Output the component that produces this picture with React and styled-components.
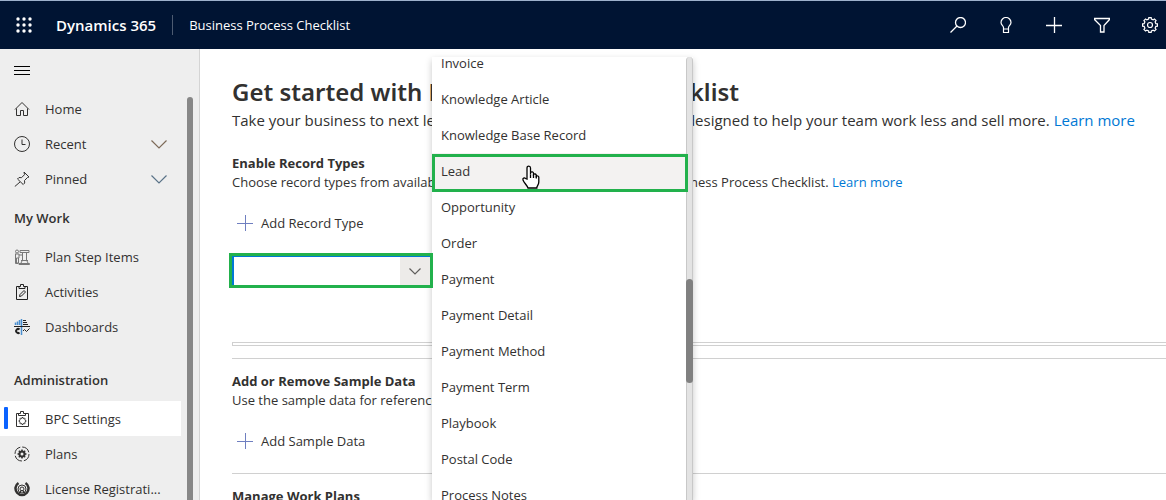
import React from "react";
import styled, { createGlobalStyle, css } from "styled-components";

const Global = createGlobalStyle`
  * { box-sizing: border-box; }
  html, body, #root { height: 100%; }
  body { margin: 0; background: #fff; color: #323130; overflow: hidden;
    font: 14px/20px "Open Sans", "Noto Sans", sans-serif; }
  button { font: inherit; color: inherit; background: none; border: 0; padding: 0; }
  h1, h2, p, ul { margin: 0; padding: 0; }
  ul { list-style: none; }
  a { text-decoration: none; color: inherit; }
`;

const Page = styled.div`height: 100%; display: flex; flex-direction: column;`;

const TopBar = styled.header`
  flex: none; display: flex; align-items: center; height: 49px;
  padding: 0 8px 0 16px; background: #001433; border-top: 1px solid #9db1cc; color: #fff;
`;
const Brand = styled.a`margin-left: 24px; font-size: 15px; font-weight: 600;`;
const AppName = styled.a`
  display: flex; align-items: center; height: 20px; margin-left: 16px; padding-left: 16px;
  border-left: 1px solid #4d5b71; font-size: 13px;
`;
const Actions = styled.div`display: flex; gap: 32px; margin-left: auto;`;
const IconButton = styled.button`display: flex;`;

const Body = styled.div`flex: 1; min-height: 0; display: flex;`;
const Sidebar = styled.nav`
  flex: none; width: 200px; display: flex; flex-direction: column; overflow: hidden;
  background: #eee; border-right: 1px solid #d4d4d4;
`;
const MenuToggle = styled.button`display: flex; margin: 12px 0 0 13px;`;
const NavScroll = styled.div`flex: 1; min-height: 0; display: flex; margin-top: 18px;`;
const NavList = styled.div`flex: none; width: 181px; margin-top: -6px;`;
const NavThumb = styled.div`width: 6px; margin-left: 6px; background: #878787; border-radius: 3px 3px 0 0;`;
const NavItem = styled.a`
  position: relative; display: flex; align-items: center; height: 35px; padding: 0 14px;
  font-size: 13px; white-space: nowrap;
  background: ${(p) => (p.$active ? "#fff" : "transparent")};
  ${(p) => p.$active && css`
    &::before { content: ""; position: absolute; left: 4px; top: 6px; width: 4px; height: 22px; background: #0b63ff; border-radius: 1px; }
  `}
  span { flex: 1; margin-left: 15px; }
`;
const NavHeading = styled.h2`
  margin-top: ${(p) => p.$gap}px; height: 43px; padding: 12px 14px; font-size: 13px; line-height: 20px; font-weight: 600;
`;

const Main = styled.main`position: relative; flex: 1; min-width: 0; padding: 26px 0 0 32px; overflow: hidden;`;
const Title = styled.h1`font-family: "Noto Sans", "Open Sans", sans-serif; font-size: 24px; line-height: 34px; font-weight: 600; white-space: nowrap;`;
const Lead = styled.p`font-size: 15px; line-height: 22px; white-space: nowrap;`;
const Link = styled.a`color: #0078d4;`;
const Section = styled.section`
  padding: ${(p) => p.$top}px 0 ${(p) => p.$bottom || 0}px;
  ${(p) => p.$ruled && css`border-top: 1px solid #d0d0d0;`}
`;
const SectionTitle = styled.h2`font-size: 13px; line-height: 20px; font-weight: 700;`;
const Text = styled.p`font-size: 13px; line-height: 18px; white-space: nowrap;`;
const Command = styled.button`
  display: flex; align-items: center; gap: 8px; height: 32px; margin-top: 16px; padding-left: 5px; font-size: 13px;
`;
const Combo = styled.div`
  position: relative; z-index: 2;
  display: flex; width: 204px; height: 35px; margin: 14px 0 0 -3px; border: 3px solid #22b14c;
  input { flex: 1; min-width: 0; border: solid #0078d4; border-width: 1px 0 0 2px; outline: 0; background: #fff; }
  button { display: flex; align-items: center; justify-content: center; width: 30px; background: #edebe9; border-top: 1px solid #0078d4; }
`;
const GridEdge = styled.div`height: 4px; margin: 54px 0 12px; border: solid #d0d0d0; border-width: 1px 0 1px 1px;`;

const Dropdown = styled.div`
  position: absolute; z-index: 1; left: 232px; top: 8px; bottom: 0; width: 261px; display: flex;
  background: #fff; box-shadow: 0 3px 7px rgba(0,0,0,.22);
`;
const Options = styled.ul`flex: 1; margin-top: -12px; clip-path: inset(12px -2px 0 0);`;
const Option = styled.li`
  position: relative; display: flex; align-items: center; height: 36px; padding: 0 9px; font-size: 13px;
  background: ${(p) => (p.$hot ? "#f3f2f1" : "transparent")};
`;
const Highlight = styled.div`
  position: absolute; left: 0; top: 1px; width: 256px; height: 38px; border: 3px solid #22b14c; z-index: 2;
`;
const Hand = styled.svg`position: absolute; left: 88px; top: 12px; z-index: 3;`;
const Track = styled.div`width: 7px; background: #e3e3e3; border-left: 1px solid #c8c8c8; border-right: 1px solid #c8c8c8; border-radius: 4px 4px 0 0;`;
const Thumb = styled.div`height: 104px; margin: 222px -1px 0; border-radius: 4px; background: #808080;`;

const Svg = ({ s = 16, w = 1, children, ...r }) => (
  <svg width={s} height={s} viewBox={`0 0 ${s} ${s}`} fill="none" stroke="currentColor" strokeWidth={w} aria-hidden="true" {...r}>{children}</svg>
);
const Gear = ({ cx, cy, r, teeth = 8, ...rest }) => {
  const pts = [];
  for (let i = 0; i < teeth; i++) {
    const a = (i * 2 * Math.PI) / teeth;
    [[-0.3, 0.8], [-0.2, 1], [0.2, 1], [0.3, 0.8]].forEach(([d, k]) => {
      const t = a + (d * 2 * Math.PI) / teeth;
      pts.push(`${cx + r * k * Math.cos(t)},${cy + r * k * Math.sin(t)}`);
    });
  }
  return <polygon points={pts.join(" ")} {...rest} />;
};
const Chevron = ({ wide, color = "#605e5c" }) => wide
  ? <svg width="16" height="11" viewBox="0 0 16 11" fill="none" stroke={color} strokeWidth="1.2" aria-hidden="true"><path d="M.5 2.500 8 10l7.500-7.500" /></svg>
  : <svg width="12" height="7" viewBox="0 0 12 7" fill="none" stroke={color} strokeWidth="1.2" aria-hidden="true"><path d="M.5.5 6 6 11.500.5" /></svg>;
const Plus = () => <Svg stroke="#6f7fc0"><path d="M8.500 0v16M0 8.500h16" /></Svg>;

const icons = {
  home: <Svg><path d="M1 8.500 8 1.500l7 7M2.500 7.500v7h4v-5h3v5h4v-7" /></Svg>,
  recent: <Svg><circle cx="8" cy="8" r="7.500" /><path d="M8 3.500v5h3.500" /></Svg>,
  pinned: <Svg><path d="M10 1l5 5-1.500.5-3 3 .2 2.500-1.500 1.500L3.500 8 5 6.500l2.500.2 3-3L10 1zM6 11 .8 15.500" /></Svg>,
  plan: <Svg stroke="#777"><path d="M6 1.500h9v2H6zM8.500 4v7M12.500 4v7M7 11.500h7M5 14.500h10.500v1H5zM8 12l-1 2M13 12l1 2M1 5h4v4H2.500v5h2V9M1.500 5v9.500h3M5 6h3" /><circle cx="3" cy="2.500" r="1.500" /></Svg>,
  activities: <Svg stroke="#222"><path d="M5 2.500H2.500v13h11v-13H11M5 4.500v-2h1.500v-2h3v2H11v2zM5.500 12.500l.5-2 4-4 1.500 1.500-4 4z" /></Svg>,
  dashboards: <Svg><path stroke="#4a8fd0" d="M1.500 6V3.500M3.500 6V2.500M5.500 6V1M7.500 0v16" strokeWidth="1.500" /><path stroke="#222" d="M0 7.500h16M9 1.500h3M9 3.500h4M9 5.500h5M9 12l1.500-1.500 2 2 3-3" /><path stroke="#222" strokeWidth="2" d="M5.500 10.500a2 2 0 1 0 0 3" /></Svg>,
  settings: <Svg><path d="M5 2.500H2.500v13h12v-13H11M4.500 4.500v-2h2v-2h3v2h2v2z" /><Gear cx={8.5} cy={10} r={3.5} /></Svg>,
  plans: <Svg><circle cx="8" cy="8" r="7" strokeDasharray="9 2" /><Gear cx={8} cy={8} r={4.5} fill="currentColor" stroke="none" /><circle cx="8" cy="8" r="1.500" fill="#eee" stroke="none" /></Svg>,
  license: <Svg><path strokeWidth="2.500" d="M4.500 2a6.500 6.500 0 1 0 7 0" /><circle cx="8" cy="8" r="4" /><circle cx="8" cy="8" r="2" /><path d="M5 12l3-3 3 3" /></Svg>,
};
const Item = ({ icon, label, chevron, active }) => (
  <NavItem href="#" $active={active} aria-current={active ? "page" : undefined}>{icons[icon]}<span>{label}</span>{chevron && <Chevron wide color={chevron} />}</NavItem>
);

const records = ["Invoice", "Knowledge Article", "Knowledge Base Record", "Lead", "Opportunity", "Order", "Payment", "Payment Detail", "Payment Method", "Payment Term", "Playbook", "Postal Code", "Process Notes"];

export default function App() {
  return (
    <Page>
      <Global />
      <TopBar>
        <IconButton aria-label="App launcher">
          <Svg stroke="none">{[2, 8, 14].map((y) => [2, 8, 14].map((x) => <circle key={x + "-" + y} cx={x} cy={y} r="1.700" fill="#fff" />))}</Svg>
        </IconButton>
        <Brand href="#">Dynamics 365</Brand>
        <AppName href="#">Business Process Checklist</AppName>
        <Actions>
          <IconButton aria-label="Search"><Svg w={1.3}><circle cx="10.500" cy="5.500" r="5" /><path d="M7 9 .5 15.500" /></Svg></IconButton>
          <IconButton aria-label="Tips"><Svg w={1.2}><path d="M5.500 12v-1.500C5.500 9 3 8 3 5.500a5 5 0 0 1 10 0C13 8 10.500 9 10.500 10.500V12zM5.500 12v3.500h5V12" /></Svg></IconButton>
          <IconButton aria-label="New"><Svg w={1.3}><path d="M8.500 0v16M0 8.500h16" /></Svg></IconButton>
          <IconButton aria-label="Filter"><Svg w={1.3}><path d="M.5 1.500h15v1l-5.500 6v6.500H6.500V8.500L.5 2.500z" /></Svg></IconButton>
          <IconButton aria-label="Settings"><Svg w={1.2}><Gear cx={8} cy={8} r={7.5} /><circle cx="8" cy="8" r="2.500" /></Svg></IconButton>
        </Actions>
      </TopBar>
      <Body>
        <Sidebar>
          <MenuToggle aria-label="Collapse navigation"><Svg s={18} stroke="#000"><path d="M1 5.500h16M1 9.500h16M1 13.500h16" /></Svg></MenuToggle>
          <NavScroll>
            <NavList>
              <Item icon="home" label="Home" />
              <Item icon="recent" label="Recent" chevron="#7d6a58" />
              <Item icon="pinned" label="Pinned" chevron="#5a7388" />
              <NavHeading $gap={0}>My Work</NavHeading>
              <Item icon="plan" label="Plan Step Items" />
              <Item icon="activities" label="Activities" />
              <Item icon="dashboards" label="Dashboards" />
              <NavHeading $gap={14}>Administration</NavHeading>
              <Item icon="settings" label="BPC Settings" active />
              <Item icon="plans" label="Plans" />
              <Item icon="license" label="License Registrati..." />
            </NavList>
            <NavThumb />
          </NavScroll>
        </Sidebar>
        <Main>
          <Title>Get started with Business Process Checklist</Title>
          <Lead>Take your business to next level with Business Process Checklist, designed to help your team work less and sell more. <Link href="#">Learn more</Link></Lead>
          <Section $top={22}>
            <SectionTitle>Enable Record Types</SectionTitle>
            <Text>Choose record types from available list to enable them for use with the Business Process Checklist. <Link href="#">Learn more</Link></Text>
            <Command><Plus />Add Record Type</Command>
            <Combo>
              <input aria-label="Record type" />
              <button aria-label="Show record types"><Chevron /></button>
            </Combo>
            <GridEdge />
          </Section>
          <Section $ruled $top={12} $bottom={16}>
            <SectionTitle>Add or Remove Sample Data</SectionTitle>
            <Text>Use the sample data for reference.</Text>
            <Command><Plus />Add Sample Data</Command>
          </Section>
          <Section $ruled $top={12}>
            <SectionTitle>Manage Work Plans</SectionTitle>
          </Section>
          <Dropdown>
            <Options role="listbox" aria-label="Record types">
              {records.map((r) => (
                <Option key={r} role="option" aria-selected={r === "Lead"} $hot={r === "Lead"}>
                  {r}
                  {r === "Lead" && <><Highlight />
                    <Hand width="22" height="24" viewBox="0 0 22 24" fill="#fff" stroke="#000" strokeWidth="1.300" aria-hidden="true">
                      <path d="M7 14V3c0-2.500 3.500-2.500 3.500 0v6.500V7.500c1-1 3-.7 3 .8v1.200c1-1 2.800-.6 2.800.8v1c1-.8 2.500-.3 2.500 1V17c0 3-2 3.500-2 6H8c-1-3-4-5-5-8-.7-2 1.500-2.500 2.500-1.500z" />
                      <path d="M10.500 9.500V13M13.500 9.500V13M16.300 10.500V13.500" />
                    </Hand></>}
                </Option>
              ))}
            </Options>
            <Track><Thumb /></Track>
          </Dropdown>
        </Main>
      </Body>
    </Page>
  );
}
